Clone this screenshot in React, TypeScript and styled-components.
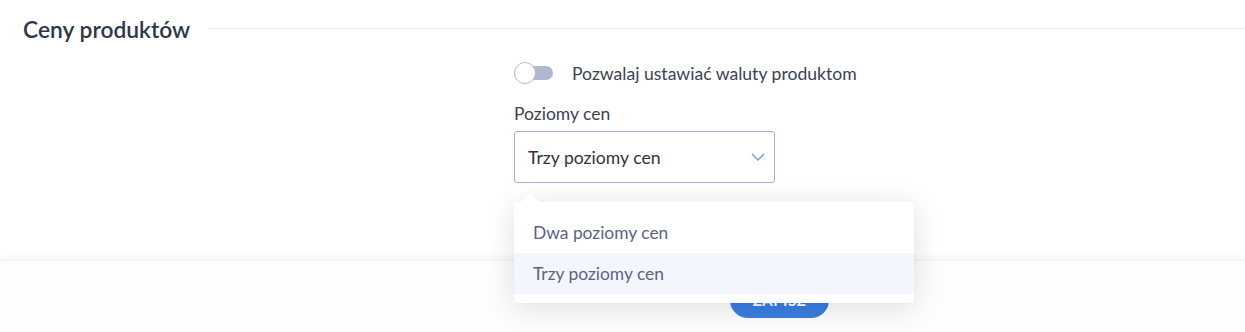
import styled, { createGlobalStyle } from "styled-components";
import { useState } from "react";

const GlobalStyle = createGlobalStyle`
  html, body {
    margin: 0;
    background: #ffffff;
    font-family: "Lato", "Liberation Sans", sans-serif;
  }
  * { box-sizing: border-box; }
`;

const options = ["Dwa poziomy cen", "Trzy poziomy cen"];

const App = () => {
  const [value, setValue] = useState(options[1]);
  const [currencies, setCurrencies] = useState(false);

  return (
    <Page>
      <GlobalStyle />
      <Section>
        <SectionHeader>
          <SectionTitle>Ceny produktów</SectionTitle>
          <Rule />
        </SectionHeader>
        <Form>
          <ToggleRow onClick={() => setCurrencies(!currencies)}>
            <Switch on={currencies}>
              <Knob on={currencies} />
            </Switch>
            <ToggleLabel>Pozwalaj ustawiać waluty produktom</ToggleLabel>
          </ToggleRow>
          <FieldLabel>Poziomy cen</FieldLabel>
          <SelectWrap>
            <SelectBox>
              <span>{value}</span>
              <svg width="14" height="8" viewBox="0 0 14 8" fill="none">
                <path d="M1 1l6 6 6-6" stroke="#6f9be8" strokeWidth="1.4" />
              </svg>
            </SelectBox>
            <Menu>
              {options.map((o) => (
                <MenuItem key={o} active={o === value} onClick={() => setValue(o)}>
                  {o}
                </MenuItem>
              ))}
            </Menu>
          </SelectWrap>
        </Form>
      </Section>
      <Footer>
        <SaveButton>Zapisz</SaveButton>
      </Footer>
    </Page>
  );
};
export default App;

const Page = styled.div`
  height: 332px;
  display: flex;
  flex-direction: column;
  overflow: hidden;
`;

const Section = styled.div`
  flex: 1;
  padding: 15px 0 0 23px;
`;

const SectionHeader = styled.div`
  display: flex;
  align-items: center;
  gap: 19px;
`;

const SectionTitle = styled.h2`
  margin: 0;
  font-size: 22.8px;
  line-height: 28px;
  font-weight: 600;
  color: #2e3748;
`;

const Rule = styled.div`
  flex: 1;
  height: 1px;
  background: #e8e9ec;
  margin-top: -1px;
`;

const Form = styled.div`
  padding: 19px 0 0 491px;
  display: flex;
  flex-direction: column;
  align-items: flex-start;
`;

const ToggleRow = styled.div`
  display: flex;
  align-items: center;
  gap: 19px;
  height: 22px;
  cursor: pointer;
`;

const Switch = styled.div<{ on: boolean }>`
  position: relative;
  width: 39px;
  height: 14px;
  border-radius: 7px;
  background: ${({ on }) => (on ? "#3a7fe1" : "#b1b7d0")};
`;

const Knob = styled.div<{ on: boolean }>`
  position: absolute;
  top: -4px;
  left: ${({ on }) => (on ? "17px" : "0")};
  width: 22px;
  height: 22px;
  border-radius: 50%;
  background: #fff;
  border: 1px solid #b4bad3;
`;

const ToggleLabel = styled.span`
  font-size: 17.6px;
  color: #3b4252;
`;

const FieldLabel = styled.div`
  margin-top: 20px;
  font-size: 17.5px;
  line-height: 20px;
  color: #3b4252;
`;

const SelectWrap = styled.div`
  position: relative;
  margin-top: 7px;
`;

const SelectBox = styled.div`
  width: 261px;
  height: 52px;
  border: 1px solid #a7b0d2;
  border-radius: 3px;
  display: flex;
  align-items: center;
  justify-content: space-between;
  padding: 0 9px 0 13px;
  font-size: 17.6px;
  color: #2d3340;
  background: #fff;
`;

const Menu = styled.div`
  position: absolute;
  top: 71px;
  left: 0;
  width: 400px;
  padding: 10px 0 9px;
  background: #fff;
  border-radius: 4px;
  box-shadow: 0 4px 30px rgba(0, 0, 0, 0.13);
  z-index: 2;

  &::before {
    content: "";
    position: absolute;
    top: -9px;
    left: 7px;
    border: 9px solid transparent;
    border-top: 0;
    border-bottom-color: #fff;
  }
`;

const MenuItem = styled.div<{ active: boolean }>`
  height: 41px;
  line-height: 41px;
  padding: 0 19px;
  font-size: 17.4px;
  color: #5b6482;
  background: ${({ active }) => (active ? "#f3f6fc" : "#fff")};
  cursor: pointer;
`;

const Footer = styled.div`
  height: 72px;
  flex-shrink: 0;
  background: #fdfdfd;
  box-shadow: 0 -3px 6px rgba(0, 0, 0, 0.04);
  border-top: 1px solid #f1f1f2;
  padding: 21px 0 0 730px;
`;

const SaveButton = styled.button`
  width: 99px;
  height: 36px;
  border: 0;
  border-radius: 18px;
  background: #3a7de0;
  color: #fff;
  font-family: inherit;
  font-size: 15px;
  font-weight: 700;
  text-transform: uppercase;
  letter-spacing: 0.5px;
`;
